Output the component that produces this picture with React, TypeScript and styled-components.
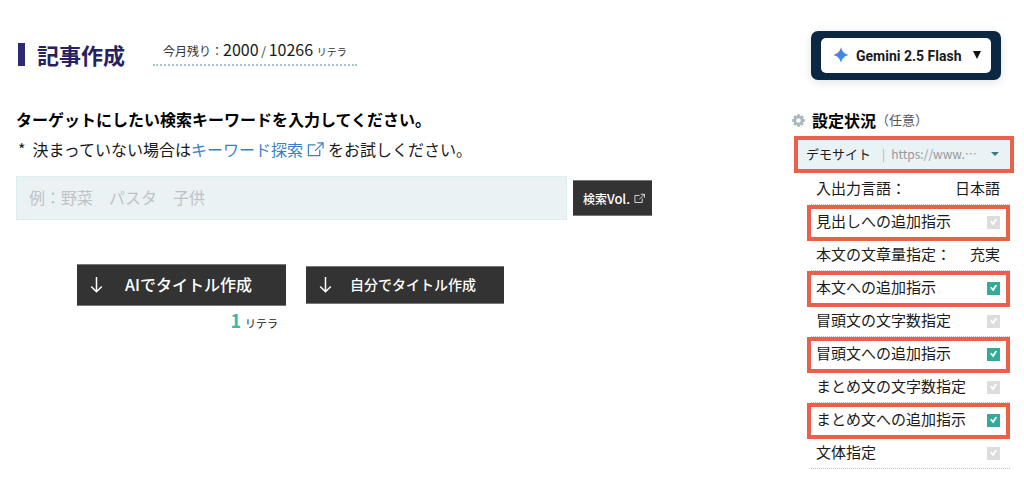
import React from "react";
import styled, { createGlobalStyle } from "styled-components";

const GlobalStyle = createGlobalStyle`
  *, *::before, *::after { box-sizing: border-box; }
  body {
    margin: 0;
    background: #fff;
    color: #1a1a1a;
    font-family: "Noto Sans CJK JP", "Noto Sans", sans-serif;
    font-size: 16px;
  }
  button, input, select { font-family: inherit; }
`;

const Page = styled.div`
  display: grid;
  grid-template-columns: minmax(0, 636px) 220px;
  justify-content: space-between;
  column-gap: 24px;
  padding: 31px 14px 15px 16px;
`;

const Main = styled.main`
  padding-top: 7px;
`;

const Header = styled.header`
  display: flex;
  gap: 28px;
  height: 32px;
`;

const Title = styled.h1`
  display: flex;
  align-items: center;
  gap: 12px;
  margin: 0 0 0 2px;
  color: #262262;
  font-size: 22px;
  line-height: 30px;
  height: 32px;
  font-weight: 700;

  &::before {
    content: "";
    width: 7px;
    height: 23px;
    background: #2e2a72;
  }
`;

const Usage = styled.p`
  align-self: flex-start;
  margin: 0;
  padding: 0 10px;
  border-bottom: 2px dotted #a9c4c8;
  color: #333;
  font-size: 12px;
  line-height: 26px;
  white-space: nowrap;
`;

const UsageNumber = styled.span`
  color: #1a1a1a;
  font-size: 16px;
  line-height: 20px;
`;

const Unit = styled.span`
  margin-left: 1px;
  font-size: 10px;
  line-height: 20px;
`;

const KeywordLabel = styled.label`
  display: block;
  margin-top: 34px;
  color: #000;
  font-weight: 700;
  line-height: 30px;
`;

const Hint = styled.p`
  display: flex;
  align-items: center;
  margin: 0 0 0 2px;
  line-height: 30px;
  white-space: nowrap;
`;

const Asterisk = styled.span`
  margin-right: 7px;
`;

const HintLink = styled.a`
  display: inline-flex;
  align-items: center;
  gap: 4px;
  margin-right: 4px;
  color: #3d7fc6;
  text-decoration: none;
`;

const SearchRow = styled.div`
  display: flex;
  align-items: center;
  gap: 6px;
  margin-top: 12px;
`;

const KeywordInput = styled.input`
  flex: 1;
  min-width: 0;
  height: 44px;
  padding: 0 12px 2px;
  border: 1px solid #dceef1;
  background: #eaf2f4;
  color: #1a1a1a;
  font-size: 16px;

  &::placeholder { color: #bfc3c5; }
`;

const DarkButton = styled.button`
  display: flex;
  align-items: center;
  border: 1px solid #777;
  border-width: 1px 0;
  background: #333;
  color: #fff;
  cursor: pointer;
  white-space: nowrap;
`;

const VolumeButton = styled(DarkButton)`
  justify-content: center;
  gap: 4px;
  width: 79px;
  height: 36px;
  padding: 0 0 0 3px;
  font-size: 12px;
  font-weight: 500;
`;

const VolumeText = styled.span`
  font-size: 13px;
`;

const Actions = styled.div`
  display: flex;
  align-items: flex-start;
  gap: 20px;
  margin: 44px 0 0 61px;
`;

const Action = styled.div<{ $offset?: number }>`
  padding-top: ${(p) => p.$offset ?? 0}px;
`;

const CreateButton = styled(DarkButton)<{ $large?: boolean }>`
  gap: ${(p) => (p.$large ? 22 : 18)}px;
  width: ${(p) => (p.$large ? 209 : 198)}px;
  height: ${(p) => (p.$large ? 42 : 38)}px;
  padding: 0 13px 2px;
  font-size: ${(p) => (p.$large ? 16 : 14)}px;
  font-weight: 500;
`;

const Cost = styled.p`
  margin: 2px 8px 0 0;
  font-size: 11px;
  line-height: 24px;
  text-align: right;
`;

const CostNumber = styled.span`
  margin-right: 4px;
  color: #3bb8a5;
  font-size: 18px;
  font-weight: 700;
`;

const Sidebar = styled.aside``;

const ModelCard = styled.label`
  position: relative;
  display: block;
  margin: 0 9px 0 21px;
  padding: 7px 10px;
  border-radius: 7px;
  background: #0c2742;
  box-shadow: 0 2px 10px rgba(0, 0, 0, 0.12);
  color: #1a1a1a;
`;

const ModelSelect = styled.select`
  display: block;
  width: 100%;
  height: 35px;
  padding: 0 20px 0 35px;
  border: 0;
  border-radius: 5px;
  appearance: none;
  background: #fff;
  color: #1a1a1a;
  font-family: Roboto, "Noto Sans CJK JP", sans-serif;
  font-size: 14px;
  font-weight: 700;
`;

const Overlay = styled.span<{ $left?: number; $right?: number }>`
  position: absolute;
  top: 0;
  bottom: 2px;
  left: ${(p) => (p.$left === undefined ? "auto" : `${p.$left}px`)};
  right: ${(p) => (p.$right === undefined ? "auto" : `${p.$right}px`)};
  display: flex;
  align-items: center;
  gap: 6px;
  pointer-events: none;
`;

const SettingsTitle = styled.h2`
  display: flex;
  align-items: center;
  margin: 28px 0 0;
  color: #000;
  font-size: 16px;
  line-height: 24px;
  font-weight: 700;

  svg { margin: 0 7px 0 2px; }
`;

const Optional = styled.span`
  color: #555;
  font-size: 13px;
  font-weight: 400;
`;

const highlightFrame = `
  content: "";
  position: absolute;
  border: 4px solid #ec5f4b;
  pointer-events: none;
`;

const SitePicker = styled.label`
  position: relative;
  display: block;
  margin: 8px 0 0 8px;

  &::after {
    ${highlightFrame}
    inset: -4px;
  }
`;

const SiteSelect = styled.select`
  display: block;
  width: 100%;
  height: 29px;
  padding: 0 28px 3px 8px;
  border: 0;
  appearance: none;
  background: #e9f2f4;
  color: #1a1a1a;
  font-size: 13px;
`;

const SiteUrl = styled.span`
  color: #999;
  font-size: 12px;
`;

const Divider = styled.span`
  color: #dca58c;
  font-size: 12px;
`;

const SettingList = styled.ul`
  margin: 3px 0 0 21px;
  padding: 0;
  list-style: none;
`;

const SettingRow = styled.li<{ $highlight?: boolean }>`
  position: relative;
  height: 33px;
  padding: 0 10px 0 5px;
  border-bottom: 1px dotted #bbb;
  font-size: 15px;
  line-height: 32px;

  ${(p) => p.$highlight && `&::after { ${highlightFrame} inset: 0 0 -4px -4px; }`}
`;

const SettingLabel = styled.label`
  display: flex;
  align-items: center;
  justify-content: space-between;
  white-space: nowrap;
`;

const Check = styled.input`
  position: relative;
  width: 13px;
  height: 13px;
  margin: 2px 0 0;
  appearance: none;
  background: #ddd;

  &:checked { background: #33ab98; }

  &::before {
    content: "";
    position: absolute;
    inset: 3px;
    background: #fff;
    clip-path: polygon(0 48%, 20% 32%, 42% 58%, 80% 0, 100% 16%, 46% 100%);
  }
`;

const ExternalIcon = ({ size }: { size: number }) => (
  <svg width={size} height={size} viewBox="0 0 18 16" fill="none" stroke="currentColor" strokeWidth="1.3" aria-hidden="true">
    <path d="M9 3H1.5v11.5h12V8M11 1h6v6M17 1 8.5 9.5" />
  </svg>
);

const ArrowDown = () => (
  <svg width="13" height="18" viewBox="0 0 13 18" fill="none" stroke="currentColor" strokeWidth="1.5" aria-hidden="true">
    <path d="M6.5 2v15M1.2 11.5l5.3 5.3 5.3-5.3" />
  </svg>
);

const Sparkle = () => (
  <svg width="16" height="16" viewBox="0 0 16 16" aria-hidden="true">
    <defs>
      <linearGradient id="spark" x1="0" y1="0" x2="1" y2="1">
        <stop offset="0.3" stopColor="#5b77d9" />
        <stop offset="0.7" stopColor="#2b95f0" />
      </linearGradient>
    </defs>
    <path fill="url(#spark)" d="M8 0.3C9.2 4.7 11.3 6.8 15.7 8 11.3 9.2 9.2 11.3 8 15.7 6.8 11.3 4.7 9.2 0.3 8 4.7 6.8 6.8 4.7 8 0.3Z" />
  </svg>
);

const Gear = () => (
  <svg width="13" height="13" viewBox="-7 -7 14 14" aria-hidden="true">
    <g fill="#a9b7c0">
      {[0, 45, 90, 135].map((a) => (
        <rect key={a} x="-1.6" y="-6.8" width="3.2" height="13.6" rx="0.6" transform={`rotate(${a})`} />
      ))}
      <circle r="5" />
    </g>
    <circle r="2.4" fill="#fff" />
  </svg>
);

const Triangle = ({ width, height, color }: { width: number; height: number; color: string }) => (
  <svg width={width} height={height} viewBox="0 0 8 8" preserveAspectRatio="none" aria-hidden="true">
    <path d="M0 0h8L4 8z" fill={color} />
  </svg>
);

type Setting = { label: string; value?: string; checked?: boolean; highlight?: boolean };

const settings: Setting[] = [
  { label: "入出力言語：", value: "日本語" },
  { label: "見出しへの追加指示", highlight: true },
  { label: "本文の文章量指定：", value: "充実" },
  { label: "本文への追加指示", checked: true, highlight: true },
  { label: "冒頭文の文字数指定" },
  { label: "冒頭文への追加指示", checked: true, highlight: true },
  { label: "まとめ文の文字数指定" },
  { label: "まとめ文への追加指示", checked: true, highlight: true },
  { label: "文体指定" },
];

export default function App() {
  return (
    <>
      <GlobalStyle />
      <Page lang="ja">
        <Main>
          <Header>
            <Title>記事作成</Title>
            <Usage>
              今月残り：<UsageNumber>2000</UsageNumber> / <UsageNumber>10266</UsageNumber> <Unit>リテラ</Unit>
            </Usage>
          </Header>

          <KeywordLabel htmlFor="keyword">ターゲットにしたい検索キーワードを入力してください。</KeywordLabel>
          <Hint>
            <Asterisk>*</Asterisk>
            決まっていない場合は
            <HintLink href="#keywords">
              キーワード探索
              <ExternalIcon size={17} />
            </HintLink>
            をお試しください。
          </Hint>

          <SearchRow>
            <KeywordInput id="keyword" type="text" placeholder="例：野菜　パスタ　子供" />
            <VolumeButton type="button">
              <span>
                検索<VolumeText>Vol.</VolumeText>
              </span>
              <ExternalIcon size={11} />
            </VolumeButton>
          </SearchRow>

          <Actions>
            <Action>
              <CreateButton type="button" $large>
                <ArrowDown />
                AIでタイトル作成
              </CreateButton>
              <Cost>
                <CostNumber>1</CostNumber>リテラ
              </Cost>
            </Action>
            <Action $offset={2}>
              <CreateButton type="button">
                <ArrowDown />
                自分でタイトル作成
              </CreateButton>
            </Action>
          </Actions>
        </Main>

        <Sidebar>
          <ModelCard>
            <ModelSelect aria-label="AIモデル" defaultValue="flash">
              <option value="flash">Gemini 2.5 Flash</option>
            </ModelSelect>
            <Overlay $left={22}>
              <Sparkle />
            </Overlay>
            <Overlay $right={20}>
              <Triangle width={8} height={8} color="#111" />
            </Overlay>
          </ModelCard>

          <SettingsTitle>
            <Gear />
            設定状況<Optional>（任意）</Optional>
          </SettingsTitle>

          <SitePicker>
            <SiteSelect aria-label="サイト" defaultValue="demo">
              <option value="demo">デモサイト</option>
            </SiteSelect>
            <Overlay $left={84}>
              <Divider>|</Divider>
              <SiteUrl>https://www.…</SiteUrl>
            </Overlay>
            <Overlay $right={11}>
              <Triangle width={8} height={4} color="#3f7885" />
            </Overlay>
          </SitePicker>

          <SettingList>
            {settings.map((s) => (
              <SettingRow key={s.label} $highlight={s.highlight}>
                <SettingLabel as={s.value ? "div" : "label"}>
                  <span>{s.label}</span>
                  {s.value ? <span>{s.value}</span> : <Check type="checkbox" defaultChecked={s.checked} />}
                </SettingLabel>
              </SettingRow>
            ))}
          </SettingList>
        </Sidebar>
      </Page>
    </>
  );
}
